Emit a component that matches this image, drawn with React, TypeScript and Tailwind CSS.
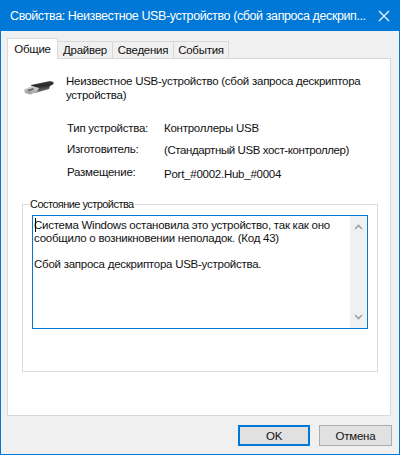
export default function App() {
  const font = { fontFamily: '"Liberation Sans", sans-serif' };
  const tabs = [
    { t: "Драйвер", w: "w-[55px]" },
    { t: "Сведения", w: "w-[61px]" },
    { t: "События", w: "w-[55px]" },
  ];
  const rows = [
    { l: "Тип устройства:", v: "Контроллеры USB", h: "h-[21px]", m: "" },
    { l: "Изготовитель:", v: "(Стандартный USB хост-контроллер)", h: "h-[23px]", m: "pt-px tracking-[-0.4px]" },
    { l: "Размещение:", v: "Port_#0002.Hub_#0004", h: "h-[20px]", m: "pt-[2px]" },
  ];
  return (
    <div className="w-[401px] h-[457px] bg-white overflow-hidden text-[11.5px] tracking-[-0.25px] leading-[14px] text-[#111]" style={font}>
      <div className="w-[400px] h-[455px] border border-[#0078d7] border-t-0 bg-[#f0f0f0] flex flex-col">
        <div className="h-[31px] bg-[#0078d7] text-white flex items-center pl-[10px] pr-[10px] justify-between text-[12.5px] tracking-[-0.4px] -mx-px">
          <span className="whitespace-nowrap">Свойства: Неизвестное USB-устройство (сбой запроса дескрип...</span>
          <svg width="12" height="12" viewBox="0 0 12 12" className="shrink-0">
            <path d="M1 1L11 11M11 1L1 11" stroke="white" strokeWidth="1.1" fill="none" />
          </svg>
        </div>
        <div className="pl-[6px] pr-[8px] pt-[7px] flex flex-col">
          <div className="flex items-end h-[20px] relative z-10">
            <div className="w-[51px] h-[21px] -mb-px bg-white border border-[#d9d9d9] border-b-0 flex items-center justify-center">Общие</div>
            {tabs.map((x) => (
              <div key={x.t} className={`${x.w} h-[17px] bg-[#f0f0f0] border border-l-0 border-[#d9d9d9] border-b-0 flex items-center justify-center`}>{x.t}</div>
            ))}
          </div>
          <div className="h-[358px] bg-white border border-[#d9d9d9] flex flex-col pl-[14px] pr-[12px]">
            <div className="flex pt-[15px] h-[58px]">
              <svg width="32" height="16" viewBox="0 0 32 16" className="ml-px mt-[6px] shrink-0">
                <defs>
                  <linearGradient id="b" x1="0" y1="0" x2="0.2" y2="1">
                    <stop offset="0" stopColor="#5a5a5a" />
                    <stop offset="0.45" stopColor="#262626" />
                    <stop offset="1" stopColor="#7a7a7a" />
                  </linearGradient>
                  <linearGradient id="s" x1="0" y1="0" x2="0" y2="1">
                    <stop offset="0" stopColor="#dcdcdc" />
                    <stop offset="1" stopColor="#999" />
                  </linearGradient>
                </defs>
                <path d="M8 5L27 1L30.5 2L30.5 4L27 6L26 9L12 13Z" fill="url(#b)" />
                <path d="M1 9.5L9 6L16 8L14 12L7 14.5L2 13Z" fill="url(#s)" />
                <path d="M4 10L10 8L11 9.5L6 11.5Z" fill="#666" />
              </svg>
              <div className="ml-[11px] w-[300px]">
                Неизвестное USB-устройство (сбой запроса дескриптора устройства)
              </div>
            </div>
            <div className="pl-[45px] mt-[2px] h-[85px] pt-[2px]">
              {rows.map((r) => (
                <div key={r.l} className={`grid grid-cols-[97px_1fr] ${r.h}`}>
                  <div>{r.l}</div>
                  <div className={r.m}>{r.v}</div>
                </div>
              ))}
            </div>
            <fieldset className="border border-[#dcdcdc] h-[175px] px-[9px] pt-[4px] -mt-[7px] mb-0 min-w-0">
              <legend className="-ml-[3px] px-[1px] text-[11px] tracking-[-0.55px]">Состояние устройства</legend>
              <div className="h-[114px] border border-[#0078d7] flex relative leading-[13px]">
                <div className="absolute left-[2px] top-[2px] w-px h-[14px] bg-black" />
                <div className="flex-1 pl-[1px] pt-[3px] pr-[4px]">
                  <p>Система Windows остановила это устройство, так как оно сообщило о возникновении неполадок. (Код 43)</p>
                  <p className="mt-[13px]">Сбой запроса дескриптора USB-устройства.</p>
                </div>
                <div className="w-[17px] bg-[#f0f0f0] flex flex-col justify-between items-center py-[8px]">
                  <svg width="9" height="6" viewBox="0 0 9 6"><path d="M1 5L4.5 1.5L8 5" stroke="#a3a3a3" strokeWidth="1.6" fill="none" /></svg>
                  <svg width="9" height="6" viewBox="0 0 9 6"><path d="M1 1L4.5 4.5L8 1" stroke="#a3a3a3" strokeWidth="1.6" fill="none" /></svg>
                </div>
              </div>
            </fieldset>
          </div>
          <div className="flex justify-end gap-[9px] mt-[9px] -mr-[1px]">
            <button className="w-[72px] h-[21px] bg-[#e1e1e1] border-2 border-[#0078d7] flex items-center justify-center">OK</button>
            <button className="w-[73px] h-[21px] bg-[#e1e1e1] border border-[#adadad] flex items-center justify-center">Отмена</button>
          </div>
        </div>
      </div>
    </div>
  );
}
